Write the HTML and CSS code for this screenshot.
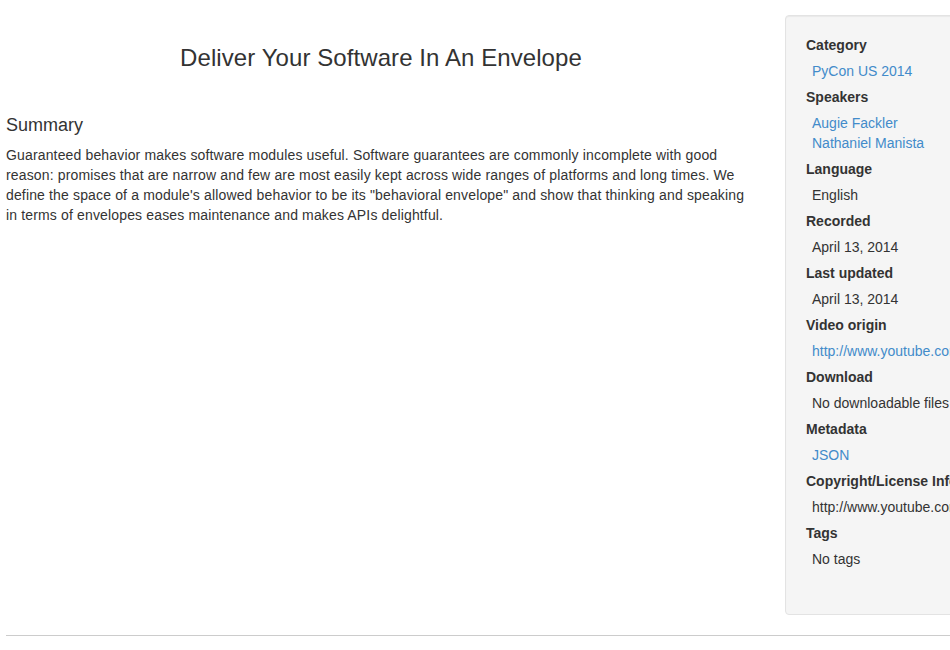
FILE: index.html
```html
<!DOCTYPE html>
<html lang="en">
<head>
<meta charset="utf-8">
<title>Deliver Your Software In An Envelope</title>
<link rel="stylesheet" href="styles.css">
</head>
<body>
<div class="page">
  <div class="row">
    <main class="content">
      <h1 class="title">Deliver Your Software In An Envelope</h1>
      <h2 class="section-title">Summary</h2>
      <p class="summary">Guaranteed behavior makes software modules useful. Software guarantees are commonly incomplete with good reason: promises that are narrow and few are most easily kept across wide ranges of platforms and long times. We define the space of a module's allowed behavior to be its "behavioral envelope" and show that thinking and speaking in terms of envelopes eases maintenance and makes APIs delightful.</p>
    </main>
    <aside class="well">
      <dl class="meta">
        <dt>Category</dt>
        <dd><a href="#">PyCon US 2014</a></dd>
        <dt>Speakers</dt>
        <dd><a href="#">Augie Fackler</a><br><a href="#">Nathaniel Manista</a></dd>
        <dt>Language</dt>
        <dd>English</dd>
        <dt>Recorded</dt>
        <dd>April 13, 2014</dd>
        <dt>Last updated</dt>
        <dd>April 13, 2014</dd>
        <dt>Video origin</dt>
        <dd><a href="#">http://www.youtube.com/watch?v=xxxxxxxx</a></dd>
        <dt>Download</dt>
        <dd>No downloadable files</dd>
        <dt>Metadata</dt>
        <dd><a href="#">JSON</a></dd>
        <dt>Copyright/License Info</dt>
        <dd>http://www.youtube.com/watch?v=xxxxxxxx</dd>
        <dt>Tags</dt>
        <dd>No tags</dd>
      </dl>
    </aside>
  </div>
  <hr class="rule">
</div>
</body>
</html>
```

FILE: styles.css
```css
html, body {
  margin: 0;
  padding: 0;
  overflow-x: hidden;
}

body {
  font-family: "Liberation Sans", Arial, Helvetica, sans-serif;
  font-size: 14px;
  line-height: 20px;
  color: #333333;
  background: #ffffff;
}

a {
  color: #428bca;
  text-decoration: none;
}

.page {
  padding-left: 6px;
  width: 1010px;
}

.row {
  display: flex;
  align-items: flex-start;
  gap: 29px;
  padding-top: 15px;
}

.content {
  width: 750px;
  flex: none;
}

.title {
  margin: 30px 0 0;
  font-size: 24px;
  font-weight: 500;
  line-height: 26px;
  letter-spacing: 0.08px;
  text-align: center;
}

.section-title {
  margin: 44px 0 10px;
  font-size: 18px;
  font-weight: 500;
  line-height: 20px;
}

.summary {
  margin: 0;
  letter-spacing: 0.15px;
}

.well {
  flex: none;
  width: 230px;
  min-height: 20px;
  padding: 19px 19px 45px 20px;
  background: #f5f5f5;
  border: 1px solid #e3e3e3;
  border-radius: 4px;
  box-shadow: inset 0 1px 1px rgba(0, 0, 0, 0.05);
  white-space: nowrap;
}

.meta {
  margin: 0;
  display: flex;
  flex-direction: column;
  gap: 6px;
}

.meta dt {
  font-weight: bold;
}

.meta dd {
  margin: 0 0 0 6px;
}

.rule {
  margin: 20px 0 0;
  border: 0;
  border-top: 1px solid #cccccc;
  height: 0;
}
```
